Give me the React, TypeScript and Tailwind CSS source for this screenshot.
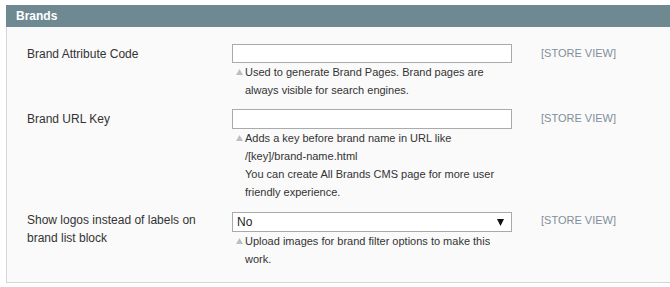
import React from 'react';

const Note = ({ children }: { children: React.ReactNode }) => (
  <div className="relative pl-[13px] text-[11px] leading-[18px] text-[#333]">
    <svg className="absolute left-[4px] top-[6px]" width="7" height="6" viewBox="0 0 7 6">
      <path d="M3.5 0 L7 6 L0 6 Z" fill="#b8c0c5" />
    </svg>
    {children}
  </div>
);

const Scope = () => (
  <div className="pl-[29px] text-[11px] leading-[18px] text-[#7f8f9b]">[STORE VIEW]</div>
);

export default function App() {
  return (
    <div className="min-h-screen bg-white pt-[5px] text-[12px] text-[#333]" style={{ fontFamily: '"Liberation Sans", Arial, sans-serif' }}>
      <div className="ml-[6px]">
        {/* Section header */}
        <div className="h-[22px] bg-[#6f8992] pl-[10px] font-bold leading-[22px] text-white">
          Brands
        </div>

        {/* Fieldset */}
        <div className="border-b border-l border-[#d6d6d6] bg-[#fafafa] pt-[17px] pb-[14px]">
          <div className="flex">
            <div className="w-[225px] pt-[1px] pr-[20px] pl-[20px] leading-[18px]">Brand Attribute Code</div>
            <div className="w-[280px]">
              <input className="block h-[19px] w-full border border-[#aaa] bg-white px-[3px] outline-none" />
              <Note>Used to generate Brand Pages. Brand pages are always visible for search engines.</Note>
            </div>
            <Scope />
          </div>

          <div className="mt-[10px] flex">
            <div className="w-[225px] pt-[1px] pr-[20px] pl-[20px] leading-[18px]">Brand URL Key</div>
            <div className="w-[280px]">
              <input className="block h-[20px] w-full border border-[#aaa] bg-white px-[3px] outline-none" />
              <Note>
                Adds a key before brand name in URL like /[key]/brand-name.html
                <br />
                You can create All Brands CMS page for more user friendly experience.
              </Note>
            </div>
            <Scope />
          </div>

          <div className="mt-[10px] flex">
            <div className="w-[225px] pr-[20px] pl-[20px] leading-[18px]">
              Show logos instead of labels on brand list block
            </div>
            <div className="w-[280px]">
              <div className="mt-[1px] flex h-[20px] w-full items-center justify-between border border-[#aaa] bg-white pr-[7px] pl-[4px] text-[#222]">
                <span>No</span>
                <svg width="7" height="7" viewBox="0 0 7 7">
                  <path d="M0 0 L7 0 L3.5 7 Z" fill="#111" />
                </svg>
              </div>
              <Note>Upload images for brand filter options to make this work.</Note>
            </div>
            <Scope />
          </div>
        </div>
      </div>
    </div>
  );
}
